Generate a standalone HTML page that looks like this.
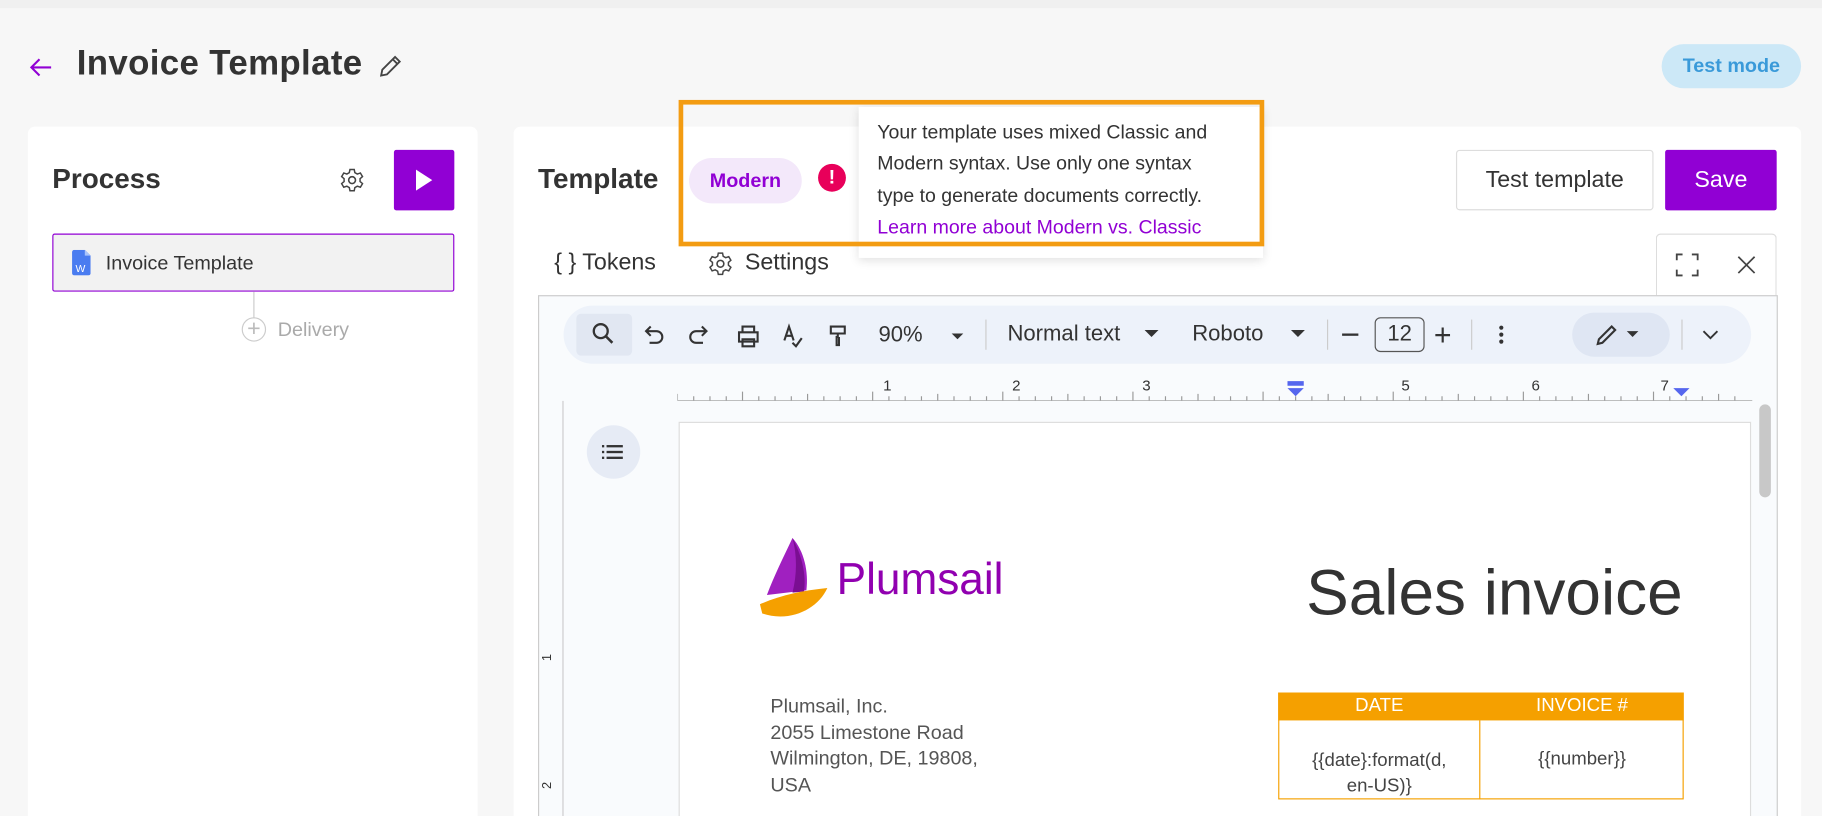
<!DOCTYPE html>
<html><head><meta charset="utf-8"><style>
*{box-sizing:border-box;margin:0;padding:0}
html,body{width:1822px;height:816px;overflow:hidden;background:#f7f7f7}
#w{width:1568px;height:702px;transform:scale(1.16199);transform-origin:0 0;position:relative;font-family:"Liberation Sans",sans-serif;color:#333}
.a{position:absolute}
.card{position:absolute;background:#fff;border-radius:6px}
</style></head><body><div id="w">
<div class="a" style="left:0;top:0;width:1568px;height:7px;background:#f0f0f0"></div>
<svg class="a" style="left:24px;top:48px" width="22" height="20" viewBox="0 0 22 20"><path d="M20 10H3M10 3L3 10l7 7" fill="none" stroke="#9100d4" stroke-width="1.8"/></svg>
<div class="a" style="left:66px;top:38px;font-size:30px;font-weight:bold;color:#333;letter-spacing:0.3px">Invoice Template</div>
<svg class="a" style="left:324px;top:45px" width="24" height="24" viewBox="0 0 24 24"><path d="M4 20l1-5L16 4l4 4L9 19z M14 6l4 4" fill="none" stroke="#444" stroke-width="1.6"/></svg>
<div class="a" style="left:1430px;top:38px;width:120px;height:38px;border-radius:19px;background:#cce8f7;color:#3a9ad9;font-weight:bold;font-size:17px;text-align:center;line-height:38px">Test mode</div>

<div class="card" style="left:24px;top:109px;width:387px;height:600px"></div>
<div class="a" style="left:45px;top:141px;font-size:24px;font-weight:bold">Process</div>
<svg class="a" style="left:292px;top:144px" width="22" height="22" viewBox="0 0 24 24"><circle cx="12" cy="12" r="3.2" fill="none" stroke="#444" stroke-width="1.5"/><path d="M10 2h4l.6 3 2.3 1.3 2.9-1 2 3.4-2.3 2v2.6l2.3 2-2 3.4-2.9-1-2.3 1.3-.6 3h-4l-.6-3-2.3-1.3-2.9 1-2-3.4 2.3-2v-2.6l-2.3-2 2-3.4 2.9 1L9.4 5z" fill="none" stroke="#444" stroke-width="1.4"/></svg>
<div class="a" style="left:339px;top:129px;width:52px;height:52px;background:#9100d4;border-radius:2px"></div>
<svg class="a" style="left:355px;top:145px" width="20" height="20"><path d="M3 1L17 10L3 19z" fill="#fff"/></svg>
<div class="a" style="left:45px;top:201px;width:346px;height:50px;background:#f2f2f2;border:1px solid #9100d4;border-radius:2px"></div>
<svg class="a" style="left:62px;top:215px" width="16" height="22"><path d="M0 2a2 2 0 012-2h9l5 5v15a2 2 0 01-2 2H2a2 2 0 01-2-2z" fill="#4a7cf0"/><path d="M11 0v5h5" fill="#aac4fa"/><text x="3" y="19" font-size="9" fill="#fff" font-family="Liberation Sans">W</text></svg>
<div class="a" style="left:91px;top:217px;font-size:17px;color:#333">Invoice Template</div>
<div class="a" style="left:218px;top:251px;width:1px;height:23px;background:#ccc"></div>
<div class="a" style="left:208px;top:273px;width:21px;height:21px;border:1px solid #ccc;border-radius:50%;color:#bbb;text-align:center;line-height:18px;font-size:20px">+</div>
<div class="a" style="left:239px;top:274px;font-size:17px;color:#aaa">Delivery</div>

<div class="card" style="left:442px;top:109px;width:1108px;height:600px"></div>
<div class="a" style="left:463px;top:141px;font-size:24px;font-weight:bold">Template</div>
<div class="a" style="left:593px;top:136px;width:97px;height:39px;border-radius:20px;background:#f3e8fa;color:#9100d4;font-weight:bold;font-size:17px;text-align:center;line-height:39px">Modern</div>
<div class="a" style="left:704px;top:141px;width:24px;height:24px;border-radius:50%;background:#e8005a;color:#fff;font-weight:bold;font-size:17px;text-align:center;line-height:24px">!</div>
<div class="a" style="left:739px;top:92px;width:348px;height:130px;background:#fff;box-shadow:0 2px 8px rgba(0,0,0,.12)"></div>
<div class="a" style="left:755px;top:100px;font-size:16.8px;line-height:27.3px;color:#333;white-space:nowrap">Your template uses mixed Classic and<br>Modern syntax. Use only one syntax<br>type to generate documents correctly.<br><span style="color:#9100d4">Learn more about Modern vs. Classic</span></div>
<div class="a" style="left:584px;top:86px;width:504px;height:126px;border:4px solid #f39c12"></div>
<div class="a" style="left:1253px;top:129px;width:170px;height:52px;border:1px solid #ddd;border-radius:3px;font-size:20px;text-align:center;line-height:50px;color:#333">Test template</div>
<div class="a" style="left:1433px;top:129px;width:96px;height:52px;background:#9100d4;border-radius:2px;font-size:20px;text-align:center;line-height:52px;color:#fff">Save</div>
<div class="a" style="left:477px;top:215px;font-size:20px;color:#333">{ } Tokens</div>
<svg class="a" style="left:609px;top:216px" width="22" height="22" viewBox="0 0 24 24"><circle cx="12" cy="12" r="3.2" fill="none" stroke="#444" stroke-width="1.5"/><path d="M10 2h4l.6 3 2.3 1.3 2.9-1 2 3.4-2.3 2v2.6l2.3 2-2 3.4-2.9-1-2.3 1.3-.6 3h-4l-.6-3-2.3-1.3-2.9 1-2-3.4 2.3-2v-2.6l-2.3-2 2-3.4 2.9 1L9.4 5z" fill="none" stroke="#444" stroke-width="1.4"/></svg>
<div class="a" style="left:641px;top:215px;font-size:20px;color:#333">Settings</div>
<div class="a" style="left:1425px;top:201px;width:104px;height:54px;border:1px solid #ddd;border-bottom:none;border-radius:4px 4px 0 0;background:#fff"></div>
<svg class="a" style="left:1442px;top:218px" width="20" height="20"><path d="M1 6V1h5M14 1h5v5M19 14v5h-5M6 19H1v-5" fill="none" stroke="#444" stroke-width="1.6"/></svg>
<svg class="a" style="left:1495px;top:220px" width="16" height="16"><path d="M1 1l14 14M15 1L1 15" stroke="#444" stroke-width="1.5"/></svg>

<div class="a" style="left:463px;top:254px;width:1067px;height:460px;border:1px solid #ccc;background:#f9fbfd"></div>
<div class="a" style="left:485px;top:263px;width:1022px;height:50px;border-radius:25px;background:#edf2fa"></div>
<div class="a" style="left:496px;top:270px;width:48px;height:36px;background:#e1e7f2;border-radius:4px"></div>
<div class="a" style="left:508px;top:275px;font-size:20px;color:#333;white-space:nowrap">
<svg width="22" height="22" viewBox="0 0 22 22" style="vertical-align:middle"><circle cx="9" cy="9" r="6" fill="none" stroke="#333" stroke-width="2"/><path d="M13.5 13.5L19 19" stroke="#333" stroke-width="2.2"/></svg></div>
<svg class="a" style="left:553px;top:278px" width="300" height="22" viewBox="0 0 300 22">
<g fill="none" stroke="#333" stroke-width="1.8"><path d="M4 7h8a5 5 0 010 10H6M7 3L3 7l4 4"/><path d="M54 7h-8a5 5 0 000 10h6M51 3l4 4-4 4"/><path d="M83 8h16v8H83zM86 8V3h10v5M86 14h10v6H86z"/><path d="M122 15l4-12 4 12M123.5 11h5M129 17l3 3 5-7"/><path d="M162 3h12v6h-12zM168 9v3h-1v7h2v-7"/></g>
<text x="203" y="16" font-size="19" fill="#333" font-family="Liberation Sans">90%</text><path d="M266 9h10l-5 5z" fill="#333"/></svg>
<div class="a" style="left:848px;top:275px;width:1px;height:26px;background:#ccc"></div>
<div class="a" style="left:867px;top:277px;font-size:19px;color:#333">Normal text</div>
<svg class="a" style="left:985px;top:284px" width="12" height="8"><path d="M0 0h12L6 6z" fill="#333"/></svg>
<div class="a" style="left:1026px;top:277px;font-size:19px;color:#333">Roboto</div>
<svg class="a" style="left:1111px;top:284px" width="12" height="8"><path d="M0 0h12L6 6z" fill="#333"/></svg>
<div class="a" style="left:1142px;top:275px;width:1px;height:26px;background:#ccc"></div>
<div class="a" style="left:1155px;top:287px;width:14px;height:2px;background:#333"></div>
<div class="a" style="left:1183px;top:273px;width:43px;height:30px;border:1px solid #555;border-radius:5px;text-align:center;line-height:28px;font-size:19px">12</div>
<div class="a" style="left:1234px;top:273px;font-size:26px;color:#333">+</div>
<div class="a" style="left:1266px;top:275px;width:1px;height:26px;background:#ccc"></div>
<svg class="a" style="left:1288px;top:279px" width="8" height="18"><circle cx="4" cy="3" r="1.8" fill="#333"/><circle cx="4" cy="9" r="1.8" fill="#333"/><circle cx="4" cy="15" r="1.8" fill="#333"/></svg>
<div class="a" style="left:1353px;top:269px;width:84px;height:38px;border-radius:19px;background:#dfe6f3"></div>
<svg class="a" style="left:1372px;top:277px" width="40" height="22"><path d="M3 19l1-4L15 4l3 3L7 18z" fill="none" stroke="#333" stroke-width="1.8"/><path d="M32 8h10l-5 5z" fill="#333" transform="translate(-4,0)"/></svg>
<div class="a" style="left:1447px;top:275px;width:1px;height:26px;background:#ccc"></div>
<svg class="a" style="left:1465px;top:283px" width="14" height="10"><path d="M1 2l6 6 6-6" fill="none" stroke="#333" stroke-width="1.6"/></svg>

<svg class="a" style="left:463px;top:318px" width="1060" height="380">
<g font-size="13" fill="#333" font-family="Liberation Sans"><text x="297" y="18">1</text><text x="408" y="18">2</text><text x="520" y="18">3</text><text x="743" y="18">5</text><text x="855" y="18">6</text><text x="966" y="18">7</text></g>
<path d="M645 10h14v4h-14zM645 16h14l-7 7z" fill="#5566ee"/><path d="M977 16h14l-7 7z" fill="#5566ee"/>
<g font-size="11" fill="#333" font-family="Liberation Sans"><text x="0" y="250" transform="rotate(-90 6 245)">1</text><text x="0" y="360" transform="rotate(-90 6 355)">2</text></g>
</svg>
<svg class="a" style="left:583px;top:331px" width="930" height="14"><g stroke="#999">
<path d="M0 14V8M14 14V10M28 14V10M42 14V10M56 14V6M70 14V10M84 14V10M98 14V10M112 14V8M126 14V10M140 14V10M154 14V10M168 14V6M182 14V10M196 14V10M210 14V10M224 14V8M238 14V10M252 14V10M266 14V10M280 14V6M294 14V10M308 14V10M322 14V10M336 14V8M350 14V10M364 14V10M378 14V10M392 14V6M406 14V10M420 14V10M434 14V10M448 14V8M462 14V10M476 14V10M490 14V10M504 14V6M518 14V10M532 14V10M546 14V10M560 14V8M574 14V10M588 14V10M602 14V10M616 14V6M630 14V10M644 14V10M658 14V10M672 14V8M686 14V10M700 14V10M714 14V10M728 14V6M742 14V10M756 14V10M770 14V10M784 14V8M798 14V10M812 14V10M826 14V10M840 14V6M854 14V10M868 14V10M882 14V10M896 14V8M910 14V10M0 14H925"/></g></svg>
<div class="a" style="left:484px;top:345px;width:1px;height:360px;background:#ccc"></div>
<div class="a" style="left:505px;top:366px;width:46px;height:46px;border-radius:50%;background:#e6ebf5"></div>
<svg class="a" style="left:518px;top:382px" width="20" height="14"><g fill="#333"><rect x="0" y="1" width="2" height="2"/><rect x="4" y="1" width="14" height="2"/><rect x="0" y="6" width="2" height="2"/><rect x="4" y="6" width="14" height="2"/><rect x="0" y="11" width="2" height="2"/><rect x="4" y="11" width="14" height="2"/></g></svg>
<div class="a" style="left:584px;top:363px;width:923px;height:350px;background:#fff;border:1px solid #ddd"></div>
<div class="a" style="left:1514px;top:348px;width:10px;height:80px;border-radius:5px;background:#c8c8c8"></div>

<svg class="a" style="left:652px;top:462px" width="64" height="72" viewBox="0 0 64 72"><path d="M30 1C22 18 14 34 8 50L42 46C44 30 40 12 30 1z" fill="#a020c0"/><path d="M30 1C38 16 42 32 40 47L30 48C34 32 34 16 30 1z" fill="#7a0e92"/><path d="M2 58C20 50 40 46 60 44C52 62 28 74 4 66z" fill="#f5a000"/></svg>
<div class="a" style="left:720px;top:478px;font-size:38px;color:#9100b0">Plumsail</div>
<div class="a" style="left:1124px;top:478px;font-size:55px;color:#333">Sales invoice</div>
<div class="a" style="left:663px;top:597px;font-size:17px;line-height:22.5px;color:#555">Plumsail, Inc.<br>2055 Limestone Road<br>Wilmington, DE, 19808,<br>USA</div>
<div class="a" style="left:1100px;top:596px;width:349px;height:92px;border:1px solid #f5a000"></div>
<div class="a" style="left:1100px;top:596px;width:349px;height:24px;background:#f5a000;color:#fff;font-size:16px;line-height:24px"><span class="a" style="left:0;width:174px;text-align:center">DATE</span><span class="a" style="left:174px;width:175px;text-align:center">INVOICE #</span></div>
<div class="a" style="left:1273px;top:620px;width:1px;height:68px;background:#f5a000"></div>
<div class="a" style="left:1100px;top:644px;width:174px;text-align:center;font-size:16px;line-height:22px;color:#444">{{date}:format(d,<br>en-US)}</div>
<div class="a" style="left:1274px;top:645px;width:175px;text-align:center;font-size:16px;color:#444">{{number}}</div>
</div></body></html>
